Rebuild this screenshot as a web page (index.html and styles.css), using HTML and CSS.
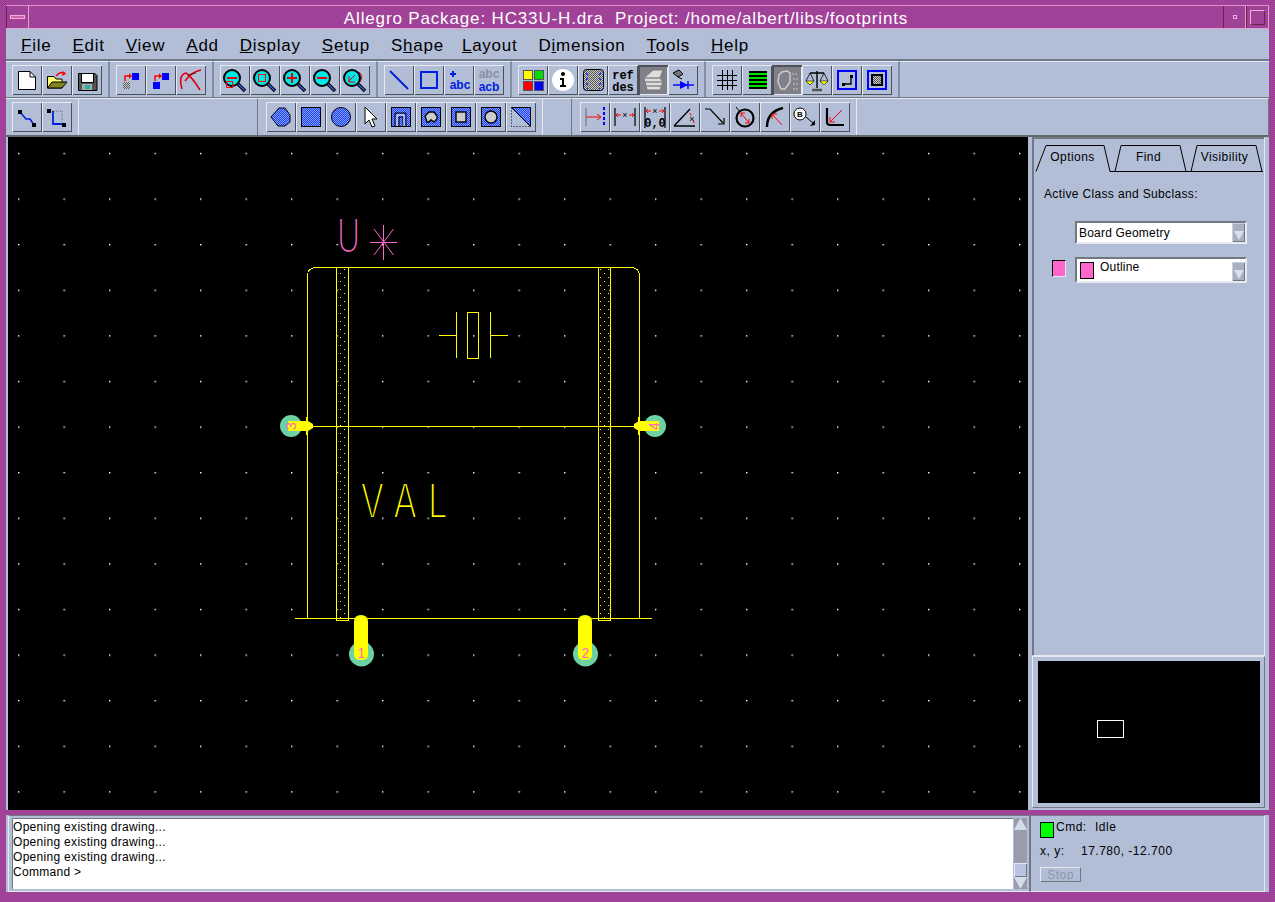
FILE: index.html
```html
<!DOCTYPE html>
<html lang="en">

<head>
    <meta charset="UTF-8">
    <title>Allegro Package: HC33U-H.dra</title>
    <link rel="stylesheet" href="styles.css">
</head>

<body>
    <!-- Shared icon parts -->
    <svg class="defs" width="0" height="0">
        <defs>
            <pattern id="blue" width="2" height="2" patternUnits="userSpaceOnUse">
                <rect width="2" height="2" fill="#2040f8" />
                <rect width="1" height="1" fill="#80a0ff" />
                <rect x="1" y="1" width="1" height="1" fill="#80a0ff" />
            </pattern>
            <pattern id="teal" width="2" height="2" patternUnits="userSpaceOnUse">
                <rect width="2" height="2" fill="#60d8a8" />
                <rect width="1" height="1" fill="#78c8a0" />
                <rect x="1" y="1" width="1" height="1" fill="#78c8a0" />
            </pattern>
            <pattern id="greyd" width="2" height="2" patternUnits="userSpaceOnUse">
                <rect width="2" height="2" fill="#555" />
                <rect width="1" height="1" fill="#ccc" />
                <rect x="1" y="1" width="1" height="1" fill="#ccc" />
            </pattern>
            <pattern id="grid" x="291" y="244" width="45.5" height="45.6" patternUnits="userSpaceOnUse">
                <rect width="1.4" height="1.4" fill="#fff" />
            </pattern>
            <pattern id="bar" x="340" y="269" width="8" height="8" patternUnits="userSpaceOnUse">
                <rect x="4" width="1" height="1" fill="#ff0" />
                <rect y="4" width="1" height="1" fill="#ff0" />
            </pattern>
            <symbol id="lens" viewBox="0 0 30 30">
                <path d="M17 18L25 26" stroke="#000" stroke-width="3.6" />
                <path d="M18 19L24.500 25.500" stroke="#3060e0" stroke-width="1.4" />
                <circle cx="12" cy="13" r="8" fill="#00e8e8" stroke="#000" stroke-width="2" />
            </symbol>
        </defs>
    </svg>

    <div class="window">
        <!-- Title bar -->
        <header class="titlebar">
            <div class="wm-btn wm-menu"><span></span></div>
            <div class="title">Allegro Package: HC33U-H.dra&nbsp; Project: /home/albert/libs/footprints</div>
            <div class="wm-btn wm-min"><span></span></div>
            <div class="wm-btn wm-max"><span></span></div>
        </header>

        <!-- Menu -->
        <nav class="menubar">
            <a><u>F</u>ile</a>
            <a><u>E</u>dit</a>
            <a><u>V</u>iew</a>
            <a><u>A</u>dd</a>
            <a><u>D</u>isplay</a>
            <a><u>S</u>etup</a>
            <a class="tight">S<u>h</u>ape</a>
            <a><u>L</u>ayout</a>
            <a>D<u>i</u>mension</a>
            <a><u>T</u>ools</a>
            <a><u>H</u>elp</a>
        </nav>

        <!-- Toolbar row 1 -->
        <div class="toolrow">
            <div class="tools">
                <button class="tb"><svg viewBox="0 0 30 30">
                        <path d="M6.500 6.500H18L23.500 12V24.500H6.500Z" fill="#fff" stroke="#000" />
                        <path d="M18 6.500V12H23.500" fill="none" stroke="#000" />
                    </svg></button>
                <button class="tb"><svg viewBox="0 0 30 30">
                        <path d="M5.500 11.500H12L14 14H20V23H5.500Z" fill="#ffff70" stroke="#000" />
                        <path d="M5.500 23L10 17H25L20 23Z" fill="#80801c" stroke="#000" />
                        <path d="M14 11Q18 6 23 8" fill="none" stroke="#f00" stroke-width="1.5" />
                        <path d="M21 6L24 9L20 11Z" fill="#f00" />
                    </svg></button>
                <button class="tb"><svg viewBox="0 0 30 30">
                        <path d="M6.500 8.500H23L25 10.500V25.500H6.500Z" fill="#555" stroke="#000" />
                        <rect x="9.500" y="8.500" width="12" height="9" fill="#fff" stroke="#000" />
                        <rect x="10" y="19" width="10" height="6" fill="#aaa" />
                        <rect x="13" y="20" width="5" height="4" fill="#20b0b0" />
                    </svg></button>
            </div>
            <div class="tools">
                <button class="tb"><svg viewBox="0 0 30 30">
                        <rect x="16" y="8" width="7" height="7" fill="#00f" />
                        <rect x="7" y="17" width="7" height="7" fill="url(#greyd)" />
                        <path d="M9 16V11H14" fill="none" stroke="#f00" stroke-width="1.5" />
                        <path d="M13 8L16 11L13 14Z" fill="#f00" />
                    </svg></button>
                <button class="tb"><svg viewBox="0 0 30 30">
                        <rect x="16" y="8" width="7" height="7" fill="#00f" />
                        <rect x="7" y="17" width="7" height="7" fill="#00f" />
                        <path d="M9 16V11H14" fill="none" stroke="#f00" stroke-width="1.5" />
                        <path d="M13 8L16 11L13 14Z" fill="#f00" />
                    </svg></button>
                <button class="tb"><svg viewBox="0 0 30 30">
                        <path d="M6 24Q2 10 10 8Q16 12 24 25" fill="none" stroke="#e00010" stroke-width="1.6" />
                        <path d="M9 16Q15 7 25 5" fill="none" stroke="#e00010" stroke-width="1.6" />
                        <path d="M12 10L20 8" stroke="#400" stroke-width=".7" />
                    </svg></button>
            </div>
            <div class="tools">
                <button class="tb"><svg viewBox="0 0 30 30">
                        <use href="#lens" width="30" height="30" />
                        <rect x="6.500" y="16.500" width="6" height="6" fill="none" stroke="#f00" />
                        <path d="M7 13H17" stroke="#e00010" stroke-width="2" />
                    </svg></button>
                <button class="tb"><svg viewBox="0 0 30 30">
                        <use href="#lens" width="30" height="30" />
                        <rect x="8.500" y="9.500" width="7" height="7" fill="none" stroke="#f00" />
                    </svg></button>
                <button class="tb"><svg viewBox="0 0 30 30">
                        <use href="#lens" width="30" height="30" />
                        <path d="M7 13H17M12 8V18" stroke="#e00010" stroke-width="2" />
                    </svg></button>
                <button class="tb"><svg viewBox="0 0 30 30">
                        <use href="#lens" width="30" height="30" />
                        <path d="M7 13H17" stroke="#e00010" stroke-width="2" />
                    </svg></button>
                <button class="tb"><svg viewBox="0 0 30 30">
                        <use href="#lens" width="30" height="30" />
                        <path d="M8 17L15 10M9 11V17H15" fill="none" stroke="#e00010" />
                        <path d="M19 7Q24 11 20 17" fill="none" stroke="#e00010" />
                    </svg></button>
            </div>
            <div class="tools">
                <button class="tb"><svg viewBox="0 0 30 30">
                        <path d="M6 6L24 24" stroke="#0020e0" stroke-width="2" />
                    </svg></button>
                <button class="tb"><svg viewBox="0 0 30 30">
                        <rect x="7" y="7" width="16" height="16" fill="none" stroke="#0020e0" stroke-width="2" />
                    </svg></button>
                <button class="tb"><svg viewBox="0 0 30 30">
                        <path d="M9 6V12M6 9H12" stroke="#0020e0" stroke-width="2" />
                        <text x="16" y="24" class="ictext abc">abc</text>
                    </svg></button>
                <button class="tb"><svg viewBox="0 0 30 30">
                        <text x="15" y="13" class="ictext abc dim">abc</text>
                        <text x="15" y="26" class="ictext abc">acb</text>
                    </svg></button>
            </div>
            <div class="tools">
                <button class="tb"><svg viewBox="0 0 30 30">
                        <rect x="5.500" y="5.500" width="9" height="9" fill="#ff0" stroke="#555" />
                        <rect x="16.500" y="5.500" width="9" height="9" fill="#0d0" stroke="#555" />
                        <rect x="5.500" y="16.500" width="9" height="9" fill="#f00" stroke="#555" />
                        <rect x="16.500" y="16.500" width="9" height="9" fill="#00f" stroke="#555" />
                    </svg></button>
                <button class="tb"><svg viewBox="0 0 30 30">
                        <circle cx="15" cy="15" r="11" fill="#fff" />
                        <circle cx="15" cy="9" r="2" fill="#000" />
                        <path d="M12 13H16V20H18V22H12V20H14V15H12Z" fill="#000" />
                    </svg></button>
                <button class="tb"><svg viewBox="0 0 30 30">
                        <rect x="5.500" y="4.500" width="20" height="21" rx="3" fill="url(#greyd)" stroke="#000" />
                        <path d="M9 8V24M22 8V24" stroke="#2040ff" stroke-width="2" stroke-dasharray="2 3" />
                    </svg></button>
                <button class="tb"><svg viewBox="0 0 30 30">
                        <text x="15" y="14" class="ictext ref">ref</text>
                        <text x="15" y="26" class="ictext ref">des</text>
                    </svg></button>
                <button class="tb tb-on"><svg viewBox="0 0 30 30">
                        <path d="M6 13L15 5H25L22 13L25 17L22 25H9Z" fill="#ddd" stroke="#777" />
                        <path d="M6 13H24M7 17H25M8 21H23" stroke="#888" stroke-width="1.4" />
                    </svg></button>
                <button class="tb"><svg viewBox="0 0 30 30">
                        <path d="M5 20H26" stroke="#00f" stroke-width="1.4" />
                        <path d="M12 16L20 20L12 24Z" fill="#00f" />
                        <path d="M20 16V24" stroke="#00f" stroke-width="1.4" />
                        <path d="M5 8L11 5L15 9L10 12Z" fill="#777" stroke="#000" />
                        <path d="M10 12L14 14" stroke="#000" />
                    </svg></button>
            </div>
            <div class="tools">
                <button class="tb"><svg viewBox="0 0 30 30">
                        <path d="M5 10.500H25M5 15.500H25M5 20.500H25M10.500 5V25M15.500 5V25M20.500 5V25" stroke="#000" />
                    </svg></button>
                <button class="tb"><svg viewBox="0 0 30 30">
                        <path d="M7 7H25M7 11H25M7 15H25M7 19H25M7 23H25" stroke="#000" stroke-width="2" />
                        <path d="M7 9H25M7 13H25M7 17H25M7 21H25" stroke="#00e000" stroke-width="2" />
                    </svg></button>
                <button class="tb tb-on"><svg viewBox="0 0 30 30">
                        <path d="M7 10L10 7L15 6L18 8L18 17L13 24H9L6 17Z" fill="none" stroke="#ccc" stroke-width="1.5" />
                        <path d="M20 9H26M21 14H26M21 19H26M21 24H26" stroke="#ccc" stroke-dasharray="2 1" />
                    </svg></button>
                <button class="tb"><svg viewBox="0 0 30 30">
                        <path d="M15 6V23M8 8H22" stroke="#000" stroke-width="1.4" />
                        <path d="M10 25H20" stroke="#555" stroke-width="2.500" />
                        <path d="M8 8L4 16M8 8L12 16M22 8L18 16M22 8L26 16" stroke="#000" stroke-width=".8" />
                        <path d="M4 16H12L8 20Z" fill="#ff0" stroke="#000" stroke-width=".6" />
                        <path d="M18 16H26L22 20Z" fill="#ff0" stroke="#000" stroke-width=".6" />
                    </svg></button>
                <button class="tb"><svg viewBox="0 0 30 30">
                        <rect x="6" y="6" width="18" height="18" fill="none" stroke="#00f" stroke-width="2" />
                        <path d="M11 19H19V11" fill="none" stroke="#000" stroke-width="1.4" />
                        <rect x="10" y="18" width="3" height="3" fill="#000" />
                        <rect x="18" y="10" width="3" height="3" fill="#000" />
                    </svg></button>
                <button class="tb"><svg viewBox="0 0 30 30">
                        <rect x="6" y="6" width="18" height="18" fill="none" stroke="#00f" stroke-width="2" />
                        <rect x="10" y="10" width="10" height="10" fill="url(#greyd)" stroke="#000" stroke-width="2" />
                    </svg></button>
            </div>
            <div class="tool-rest"></div>
        </div>

        <!-- Toolbar row 2 -->
        <div class="toolrow">
            <div class="tools tools-sm">
                <button class="tb"><svg viewBox="0 0 30 30">
                        <path d="M8 10L14 17H18L22 23" fill="none" stroke="#0020e0" stroke-width="1.6" />
                        <rect x="6" y="8" width="4" height="4" fill="#000" />
                        <rect x="20" y="21" width="4" height="4" fill="#000" />
                    </svg></button>
                <button class="tb"><svg viewBox="0 0 30 30">
                        <path d="M8 9H20V22" fill="none" stroke="#888" stroke-dasharray="1 1" stroke-width="1.4" />
                        <path d="M11 9V22H22" fill="none" stroke="#0020e0" stroke-width="1.8" />
                        <rect x="5" y="7" width="4" height="4" fill="#000" />
                        <rect x="20" y="21" width="4" height="4" fill="#000" />
                    </svg></button>
            </div>
            <div class="tool-gap tool-gap-wide"></div>
            <div class="tools tools-mid">
                <button class="tb"><svg viewBox="0 0 30 30">
                        <path d="M5 15L13 6H19L24 13V20L19 24H12Z" fill="url(#blue)" stroke="#000" />
                    </svg></button>
                <button class="tb"><svg viewBox="0 0 30 30">
                        <rect x="5.500" y="5.500" width="19" height="19" fill="url(#blue)" stroke="#000" />
                    </svg></button>
                <button class="tb"><svg viewBox="0 0 30 30">
                        <circle cx="15" cy="15" r="9.500" fill="url(#blue)" stroke="#000" />
                    </svg></button>
                <button class="tb"><svg viewBox="0 0 30 30">
                        <path d="M9 5V22L13 18L16 25L19 24L16 17H21Z" fill="#fff" stroke="#000" />
                    </svg></button>
                <button class="tb"><svg viewBox="0 0 30 30">
                        <rect x="5.500" y="5.500" width="19" height="19" fill="url(#blue)" stroke="#000" />
                        <path d="M9 24V11H20V24M13 24V15H17V24" fill="none" stroke="#000" />
                        <path d="M11 24V13H18V24" fill="none" stroke="#fff" />
                    </svg></button>
                <button class="tb"><svg viewBox="0 0 30 30">
                        <rect x="5.500" y="5.500" width="19" height="19" fill="url(#blue)" stroke="#000" />
                        <path d="M9 14L13 10H18L21 14V17L18 20L15 18L13 20H11Z" fill="#ccc" stroke="#000" stroke-width="1.4" />
                    </svg></button>
                <button class="tb"><svg viewBox="0 0 30 30">
                        <rect x="5.500" y="5.500" width="19" height="19" fill="url(#blue)" stroke="#000" />
                        <rect x="10" y="10" width="10" height="10" fill="#ccc" stroke="#000" stroke-width="1.4" />
                    </svg></button>
                <button class="tb"><svg viewBox="0 0 30 30">
                        <rect x="5.500" y="5.500" width="19" height="19" fill="url(#blue)" stroke="#000" />
                        <circle cx="15" cy="15" r="6" fill="#ccc" stroke="#000" stroke-width="1.4" />
                    </svg></button>
                <button class="tb"><svg viewBox="0 0 30 30">
                        <path d="M5.500 5.500H24.500V24.500Z" fill="url(#blue)" stroke="#000" />
                        <path d="M5.500 5.500V24.500H24.500" fill="none" stroke="#000" stroke-dasharray="1 2" />
                    </svg></button>
            </div>
            <div class="tool-gap"></div>
            <div class="tools tools-mid">
                <button class="tb"><svg viewBox="0 0 30 30">
                        <path d="M6 6V24" stroke="#888" stroke-width="1.6" />
                        <path d="M24 5V25" stroke="#00f" stroke-width="2" stroke-dasharray="3 2" />
                        <path d="M6 15H20M17 12L21 15L17 18" fill="none" stroke="#f00" />
                    </svg></button>
                <button class="tb"><svg viewBox="0 0 30 30">
                        <path d="M5 6V24M25 6V24" stroke="#000" stroke-width="1.2" />
                        <path d="M6 13H11M8 11L6 13L8 15M19 13H24M22 11L24 13L22 15" fill="none" stroke="#f00" />
                        <text x="15" y="16" class="ictext tiny">×</text>
                    </svg></button>
                <button class="tb"><svg viewBox="0 0 30 30">
                        <path d="M5 5V26M25 5V26" stroke="#000" stroke-width="1.2" />
                        <path d="M6 9H11M8 7L6 9L8 11M19 9H24M22 7L24 9L22 11" fill="none" stroke="#f00" />
                        <text x="15" y="12" class="ictext tiny">×</text>
                        <text x="15" y="25" class="ictext zero">0,0</text>
                    </svg></button>
                <button class="tb"><svg viewBox="0 0 30 30">
                        <path d="M4 24H25M4 24L20 7" fill="none" stroke="#000" stroke-width="1.4" />
                        <path d="M20 11L25 23" stroke="#f00" stroke-dasharray="3 5" />
                        <text x="22" y="20" class="ictext tiny">×</text>
                    </svg></button>
                <button class="tb"><svg viewBox="0 0 30 30">
                        <path d="M5 7H10L23 21" fill="none" stroke="#000" stroke-width="1.2" />
                        <path d="M18 22H24V16" fill="none" stroke="#000" stroke-width="1.2" />
                    </svg></button>
                <button class="tb"><svg viewBox="0 0 30 30">
                        <path d="M6 5L10 10" stroke="#000" />
                        <circle cx="15" cy="16" r="8.500" fill="none" stroke="#000" stroke-width="2.200" />
                        <path d="M11 11L19 21M11 15V11H15M19 17V21H15" fill="none" stroke="#f00" />
                    </svg></button>
                <button class="tb"><svg viewBox="0 0 30 30">
                        <path d="M7 25Q7 10 23 6" fill="none" stroke="#000" stroke-width="2.400" />
                        <path d="M12 12L22 23M12 17V12H17" fill="none" stroke="#f00" />
                    </svg></button>
                <button class="tb"><svg viewBox="0 0 30 30">
                        <circle cx="10" cy="12" r="6" fill="#fff" stroke="#000" />
                        <text x="10" y="15" class="ictext bub">B</text>
                        <path d="M16 15L24 22" stroke="#000" />
                        <path d="M20 24L25 23L25 18Z" fill="#000" />
                    </svg></button>
                <button class="tb"><svg viewBox="0 0 30 30">
                        <path d="M7 6V20Q7 23 10 23H24" fill="none" stroke="#000" stroke-width="2.200" />
                        <path d="M10 20L22 8M10 15V20H15" fill="none" stroke="#f00" />
                    </svg></button>
            </div>
            <div class="tool-gap tool-gap-end"></div>
        </div>

        <!-- Canvas and side panel -->
        <main class="work">
            <svg class="canvas" viewBox="8 137 1020 673">
                <rect x="8" y="137" width="1020" height="673" fill="#000" />
                <rect x="8" y="137" width="1020" height="673" fill="url(#grid)" />
                <g class="lines">
                    <path d="M307.500 618V276Q307.500 267.500 316 267.500H630Q639.500 267.500 639.500 276V618" />
                    <path d="M295 618.500H652M300 426.500H640" />
                    <rect x="336.500" y="267.500" width="12" height="353" fill="url(#bar)" />
                    <rect x="598.500" y="267.500" width="12" height="353" fill="url(#bar)" />
                    <path d="M439 335.500H456.500M456.500 312V358M490.500 312V358M490.500 335.500H508" />
                    <rect class="hollow" x="467.500" y="312.500" width="11" height="46" />
                    <path d="M306.500 417V435M638.500 417V435" />
                </g>
                <text class="cad-big" transform="translate(361 518) scale(.68 1)" x="0 48 99">VAL</text>
                <text class="cad-u" transform="translate(337 253) scale(.64 1)">U</text>
                <path class="star" d="M370 242.500H397M383.500 225V260M374 229L393.500 255M393.500 229L374 255" />

                <g class="pad">
                    <circle cx="291" cy="426" r="11" />
                    <path class="pill" d="M288 421H308L313 424V428L308 431H288Z" />
                    <text class="padnum" transform="translate(296 426) rotate(-90)">3</text>
                </g>
                <g class="pad">
                    <circle cx="655" cy="426" r="11" />
                    <path class="pill" d="M659 421H639L634 424V428L639 431H659Z" />
                    <text class="padnum" transform="translate(659 426) rotate(-90)">4</text>
                </g>
                <g class="pad">
                    <circle cx="361.500" cy="654" r="12.500" />
                    <path class="pill" d="M354 622Q354 615 361 615Q368 615 368 622V655Q368 660 361 660Q354 660 354 655Z" />
                    <text class="padnum" x="361.500" y="658">1</text>
                </g>
                <g class="pad">
                    <circle cx="585.500" cy="654" r="12.500" />
                    <path class="pill" d="M578 622Q578 615 585 615Q592 615 592 622V655Q592 660 585 660Q578 660 578 655Z" />
                    <text class="padnum" x="585.500" y="658">2</text>
                </g>
            </svg>

            <aside class="side">
                <section class="options">
                    <div class="tabs">
                        <svg class="tab-lines" viewBox="0 0 233 34">
                            <path d="M3 33.500L13 7.500H71L77 33.500H230M82 33.500L88 7.500H147L153 33.500M158 33.500L164 7.500H223L229 33.500" />
                        </svg>
                        <span class="tab">Options</span>
                        <span class="tab">Find</span>
                        <span class="tab">Visibility</span>
                    </div>
                    <p class="label">Active Class and Subclass:</p>
                    <div class="combo-row">
                        <div class="combo">
                            <span class="combo-text">Board Geometry</span>
                            <span class="combo-arrow"></span>
                        </div>
                    </div>
                    <div class="combo-row combo-row-swatch">
                        <span class="swatch"></span>
                        <div class="combo combo-tall">
                            <span class="swatch swatch-in"></span>
                            <span class="combo-text">Outline</span>
                            <span class="combo-arrow"></span>
                        </div>
                    </div>
                </section>
                <section class="mini">
                    <div class="mini-view"><span class="mini-box"></span></div>
                </section>
            </aside>
        </main>

        <!-- Console and status -->
        <footer class="bottom">
            <div class="console">
                <pre class="log">Opening existing drawing...
Opening existing drawing...
Opening existing drawing...
Command &gt;</pre>
                <div class="scroll">
                    <span class="scroll-arrow"></span>
                    <span class="scroll-track"></span>
                    <span class="scroll-thumb"></span>
                    <span class="scroll-arrow scroll-arrow-dn"></span>
                </div>
            </div>
            <div class="status">
                <div class="status-cmd"><span class="led"></span><span class="cmd-key">Cmd:</span><span>Idle</span></div>
                <div class="status-xy"><span class="xy-key">x, y:</span><span>17.780, -12.700</span></div>
                <button class="stop">Stop</button>
            </div>
        </footer>
    </div>
</body>

</html>
```
FILE: styles.css
```css
/* General */
* {
    margin: 0;
    padding: 0;
    box-sizing: border-box;
}

:root {
    --face: url("data:image/svg+xml,%3Csvg xmlns='http://www.w3.org/2000/svg' width='2' height='2' shape-rendering='crispEdges'%3E%3Crect width='2' height='2' fill='%23a0bcff'/%3E%3Crect width='1' height='1' fill='%23c4c0b0'/%3E%3Crect x='1' y='1' width='1' height='1' fill='%23c4c0b0'/%3E%3C/svg%3E");
    --frame: url("data:image/svg+xml,%3Csvg xmlns='http://www.w3.org/2000/svg' width='2' height='2' shape-rendering='crispEdges'%3E%3Crect width='2' height='2' fill='%23b83cb8'/%3E%3Crect width='1' height='1' fill='%23884878'/%3E%3Crect x='1' y='1' width='1' height='1' fill='%23884878'/%3E%3C/svg%3E");
}

body {
    width: 1275px;
    height: 902px;
    overflow: hidden;
    font-family: "Liberation Sans", Arial, sans-serif;
    color: #000;
    background: var(--frame);
}

.defs {
    position: absolute;
}

.window {
    height: 902px;
    padding: 5px 6px 6px;
    display: flex;
    flex-direction: column;
}

/* Title bar */
.titlebar {
    height: 24px;
    display: flex;
    border-top: 1px solid #e090c8;
    border-bottom: 1px solid #e0a0d0;
}

.title {
    flex: 1;
    text-align: center;
    color: #fff;
    font-size: 17px;
    line-height: 25px;
    letter-spacing: 0.85px;
    white-space: pre;
}

.wm-btn {
    width: 23px;
    display: flex;
    align-items: center;
    justify-content: center;
    border-right: 1px solid #e0a0d0;
    border-left: 1px solid #702050;
}

.wm-menu span {
    width: 15px;
    height: 4px;
    background: #d060a8;
    border: 1px solid #f0b0d8;
}

.wm-min span {
    width: 4px;
    height: 4px;
    background: #a040a0;
    border: 1px solid #f0b0d8;
}

.wm-max span {
    width: 15px;
    height: 15px;
    border: 1px solid #f0b0d8;
    border-right-color: #702050;
    border-bottom-color: #702050;
}

/* Menu */
.menubar {
    height: 32px;
    background: var(--face);
    display: flex;
    align-items: center;
    gap: 21px;
    padding: 3px 15px 0;
    font-size: 17px;
    letter-spacing: 0.75px;
    border-bottom: 2px solid #6a7a8a;
}

.menubar a {
    color: #000;
}

.menubar .tight {
    margin-right: -3px;
}

/* Toolbars */
.toolrow {
    height: 37px;
    display: flex;
    background: var(--face);
    border-bottom: 1px solid #707880;
}

/* starts on an even pixel row, shifted so the dither stays in step */
.toolrow + .toolrow {
    height: 39px;
    background-position: 0 1px;
    border-bottom: 2px solid #606870;
}

.tools {
    display: flex;
    padding: 3px 6px;
    border-right: 2px solid #8090a0;
    border-top: 1px solid #e8e8f0;
}

.tools-sm {
    border-right: none;
}

.tools-mid {
    padding-left: 8px;
    border-right: none;
}

.tool-rest {
    flex: 1;
    border-top: 1px solid #e8e8f0;
}

.tool-gap {
    width: 30px;
    border-left: 1px solid #e8e8f0;
    border-right: 1px solid #707880;
    border-top: 1px solid #e8e8f0;
}

.tool-gap-wide {
    width: 180px;
}

.tool-gap-end {
    flex: 1;
}

.tb {
    width: 30px;
    height: 30px;
    border: none;
    background: none;
    box-shadow: inset 1px 1px #e8e8f0, inset -1px -1px #485058;
}

.tb svg {
    width: 30px;
    height: 30px;
    display: block;
}

.tb-on {
    background: #808088;
    box-shadow: inset 2px 2px #505058, inset -1px -1px #e8e8f0;
}

.ictext {
    font-family: "Liberation Sans", sans-serif;
    font-weight: bold;
    text-anchor: middle;
}

.abc {
    font-size: 12px;
    fill: #0020e0;
}

.abc.dim {
    fill: #8890a0;
}

.ref {
    font-family: "Liberation Mono", monospace;
    font-size: 12px;
    fill: #000;
}

.tiny {
    font-size: 9px;
    font-weight: normal;
    fill: #000;
}

.zero {
    font-family: "Liberation Mono", monospace;
    font-size: 12px;
    fill: #000;
}

.bub {
    font-size: 8px;
    fill: #000;
}

/* Canvas */
.work {
    height: 673px;
    display: flex;
    background: var(--face);
}

.canvas {
    width: 1020px;
    height: 673px;
    margin-left: 2px;
    display: block;
    flex: none;
}

.lines path,
.lines rect {
    stroke: #ff0;
    stroke-width: 1;
    shape-rendering: crispEdges;
}

.lines path,
.lines .hollow {
    fill: none;
}

.cad-big {
    font-size: 50px;
    fill: #ff0;
    stroke: #000;
    stroke-width: 2px;
}

.cad-u {
    font-size: 50px;
    fill: #ff66cc;
    stroke: #000;
    stroke-width: 2.2px;
}

.star {
    fill: none;
    stroke: #ff66cc;
    stroke-width: 1;
}

.pad circle {
    fill: url(#teal);
}

.pill {
    fill: #ff0;
}

.padnum {
    font-size: 14px;
    fill: #ff66cc;
    text-anchor: middle;
}

/* Side panel */
.side {
    width: 241px;
    padding: 0 4px;
    display: flex;
    flex-direction: column;
}

.options {
    height: 519px;
    border: 1px solid;
    border-color: #707880 #e8e8f0 #e8e8f0 #707880;
    box-shadow: inset 1px 1px #707880;
}

.tabs {
    position: relative;
    height: 34px;
    display: flex;
    padding-top: 8px;
    font-size: 12px;
    letter-spacing: 0.45px;
}

.tab-lines {
    position: absolute;
    top: 0;
    left: 0;
    width: 233px;
    height: 34px;
}

.tab-lines path {
    fill: none;
    stroke: #000;
}

.tab {
    width: 76px;
    text-align: center;
    line-height: 22px;
    padding-left: 3px;
}

.label {
    margin: 15px 0 0 11px;
    font-size: 12px;
    letter-spacing: 0.35px;
    line-height: 14px;
}

.combo-row {
    margin: 20px 0 0 42px;
    width: 172px;
}

.combo-row-swatch {
    position: relative;
    margin-top: 13px;
}

.combo {
    height: 23px;
    display: flex;
    align-items: center;
    background: #fff;
    border: 2px solid;
    border-color: #707880 #e8e8f0 #e8e8f0 #707880;
    padding-left: 2px;
    font-size: 12px;
    letter-spacing: 0.2px;
}

.combo-tall {
    height: 26px;
    align-items: flex-start;
}

.combo-text {
    flex: 1;
    line-height: 18px;
}

.combo-arrow {
    width: 13px;
    height: 19px;
    background: #a8b0c0;
    box-shadow: inset 1px 1px #c8d0e0, inset -1px -1px #707880;
    align-self: flex-end;
    display: flex;
    align-items: flex-end;
    justify-content: center;
    padding-bottom: 2px;
}

.combo-arrow::after {
    content: "";
    border-top: 9px solid #d8e0ec;
    border-left: 5px solid transparent;
    border-right: 5px solid transparent;
}

.combo-tall .combo-text {
    line-height: 17px;
}

.swatch {
    position: absolute;
    left: -23px;
    top: 3px;
    width: 14px;
    height: 17px;
    background: #ff66cc;
    border: 1px solid #000;
    border-right-color: #e8e8f0;
    border-bottom-color: #e8e8f0;
}

.swatch-in {
    position: static;
    flex: none;
    margin: 3px 6px 0 1px;
    border: 1px solid #000;
}

.mini {
    height: 152px;
    padding: 4px 4px 5px 5px;
    border: 1px solid;
    border-color: #e8e8f0 #707880 #707880 #e8e8f0;
}

.mini-view {
    position: relative;
    height: 142px;
    background: #000;
}

.mini-box {
    position: absolute;
    left: 59px;
    top: 59px;
    width: 27px;
    height: 18px;
    border: 1px solid #fff;
}

/* Bottom */
.bottom {
    height: 77px;
    margin-top: 5px;
    display: flex;
    background: var(--face);
}

.console {
    width: 1022px;
    margin-left: 2px;
    display: flex;
    padding: 2px 2px 2px 3px;
    border: 1px solid;
    border-color: #707880 #707880 #e8e8f0 #e8e8f0;
}

.log {
    flex: 1;
    background: #fff;
    border-left: 1px solid #707880;
    border-top: 1px solid #707880;
    padding: 1px 0 0;
    font-family: "Liberation Sans", sans-serif;
    font-size: 12px;
    line-height: 15px;
    letter-spacing: 0.3px;
}

.scroll {
    width: 13px;
    margin-left: 1px;
    display: flex;
    flex-direction: column;
    background: #989cac;
}

.scroll-arrow {
    height: 12px;
    background: #d4dcec;
    clip-path: polygon(50% 0, 100% 100%, 0 100%);
}

.scroll-arrow-dn {
    clip-path: polygon(0 0, 100% 0, 50% 100%);
}

.scroll-track {
    flex: 1;
}

.scroll-thumb {
    height: 14px;
    background: #b8c4e0;
    box-shadow: inset 1px 1px #e8e8f0, inset -1px -1px #707880;
}

.status {
    width: 235px;
    padding: 5px 0 0 9px;
    border: 1px solid;
    border-color: #707880 #e8e8f0 #e8e8f0 #707880;
    font-size: 12px;
    letter-spacing: 0.5px;
}

.status-cmd {
    display: flex;
    height: 17px;
    line-height: 13px;
}

.led {
    width: 14px;
    height: 16px;
    margin: 1px 2px 0 0;
    background: #0f0;
    border: 1px solid #000;
}

.cmd-key {
    width: 39px;
}

.status-xy {
    display: flex;
    margin-top: 5px;
    line-height: 16px;
}

.xy-key {
    width: 41px;
}

.stop {
    display: block;
    width: 41px;
    height: 15px;
    margin-top: 8px;
    background: none;
    border: 1px solid #e8e8f0;
    border-right-color: #707880;
    border-bottom-color: #707880;
    color: #8a96a8;
    font-family: "Liberation Sans", sans-serif;
    font-size: 12px;
    letter-spacing: 0.5px;
    line-height: 12px;
}
```
